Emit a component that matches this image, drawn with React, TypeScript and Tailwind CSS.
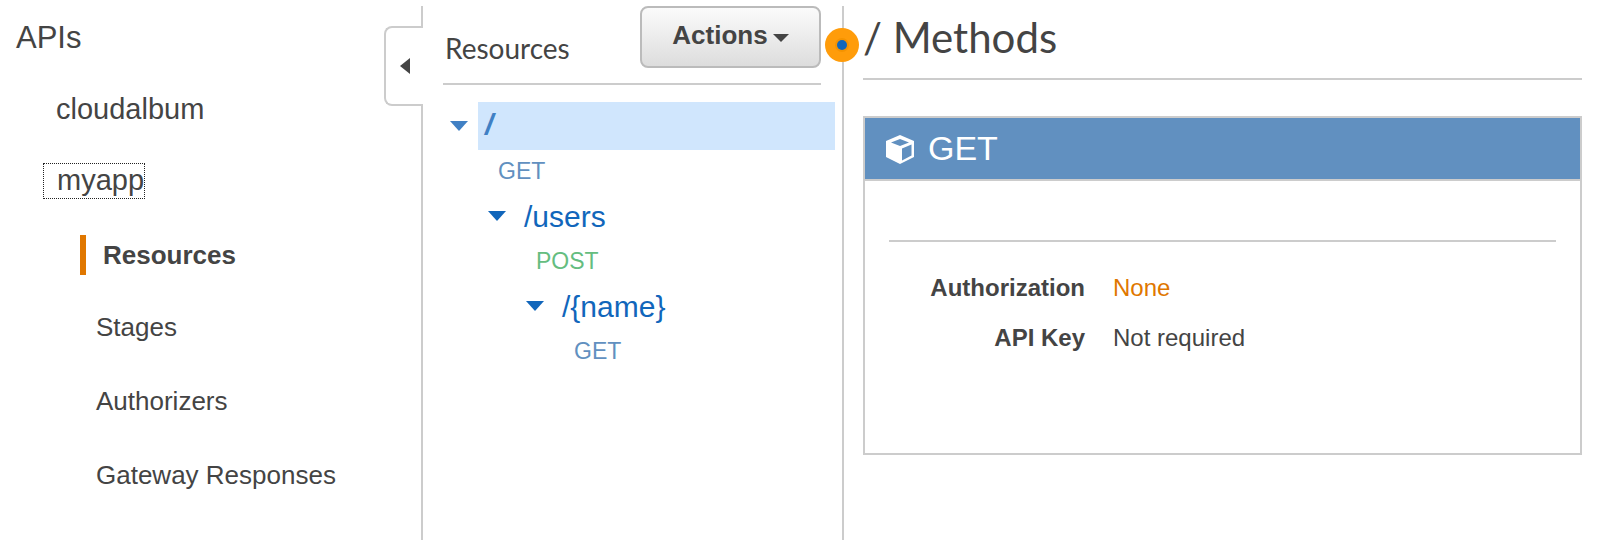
import React from "react";

const sans = "font-['Liberation_Sans',Arial,sans-serif]";
const lato = "font-['Lato',sans-serif]";

const Caret = ({ light }: { light?: boolean }) => (
  <svg width="18" height="10" viewBox="0 0 18 10" className="shrink-0">
    <path d="M0 0H18L9 10Z" fill={light ? "#4080c4" : "#1166bb"} />
  </svg>
);

const CubeIcon = () => (
  <svg width="32" height="32" viewBox="0 0 32 32" className="shrink-0">
    <path d="M16 2 L30 8 V24 L16 31 L2 24 V8 Z" fill="#fff" />
    <path d="M16 6 L25 9.5 L16 13 L7 9.5 Z" fill="#6190c0" />
    <path d="M18 15.5 L27.5 11.5 V22.5 L18 27.5 Z" fill="#6190c0" />
  </svg>
);

const App: React.FC = () => {
  return (
    <div className={`relative flex h-[540px] w-[1598px] overflow-hidden bg-white text-[#444] ${sans}`}>
      {/* left nav */}
      <div className="relative mt-[6px] w-[423px] shrink-0 border-r-2 border-[#ccc]">
        <div className="pl-4 pt-[12px] text-[31px] leading-[40px]">APIs</div>
        <ul className="text-[27px] leading-[36px]">
          <li className="mt-[33px] pl-[56px] text-[29px]">cloudalbum</li>
          <li className="mt-[36px] pl-[43px]">
            <span className="block h-[36px] w-[102px] border border-dotted border-[#222] pl-[13px] text-[29px] leading-[32px]">myapp</span>
          </li>
        </ul>
        <div className="mt-[36px] ml-[80px] border-l-[6px] border-[#e07700] pl-[17px] text-[26px] font-bold leading-[40px]">Resources</div>
        <ul className="mt-[34px] flex flex-col gap-[38px] pl-[96px] text-[26px] leading-[36px]">
          <li>Stages</li>
          <li>Authorizers</li>
          <li>Gateway Responses</li>
        </ul>
        {/* collapse tab */}
        <div className="absolute left-[384px] top-[20px] flex h-[80px] w-[39px] items-center rounded-l-lg border-2 border-r-0 border-[#ccc] bg-white pl-[14px]">
          <svg width="10" height="16" viewBox="0 0 10 16">
            <path d="M10 0V16L0 8Z" fill="#444" />
          </svg>
        </div>
      </div>

      {/* resources tree */}
      <div className="mt-[6px] w-[421px] shrink-0 border-r-2 border-[#ccc] pl-5 pr-[21px]">
        <div className="flex h-[79px] items-start justify-between border-b-2 border-[#ccc]">
          <div className={`${lato} pl-[2px] pt-[24px] text-[28px] leading-[36px]`}>Resources</div>
          <button className="flex h-[62px] w-[181px] items-center justify-center rounded-lg border-2 border-[#bbb] bg-gradient-to-b from-[#fbfbfb] to-[#ddd] pb-[3px] text-[26px] font-bold">
            Actions
            <svg width="16" height="8" viewBox="0 0 16 8" className="ml-[5px] mt-[4px]">
              <path d="M0 0H16L8 8Z" fill="#444" />
            </svg>
          </button>
        </div>
        <div className="mt-[17px]">
          <div className="flex items-center">
            <div className="flex w-[35px] justify-center pr-1"><Caret light /></div>
            <div className="mr-[-14px] h-[48px] flex-1 bg-[#d0e6fd] pl-[7px] text-[30px] font-bold italic leading-[46px] text-[#4080c4]">/</div>
          </div>
          <div className="h-[42px] pl-[55px] text-[23px] leading-[42px] text-[#6190c0]">GET</div>
          <div className="flex h-[48px] items-center pl-[45px] text-[30px] text-[#1166bb]">
            <Caret />
            <span className="ml-[18px]">/users</span>
          </div>
          <div className="h-[42px] pl-[93px] text-[23px] leading-[42px] text-[#65bd80]">POST</div>
          <div className="flex h-[48px] items-center pl-[83px] text-[30px] text-[#1166bb]">
            <Caret />
            <span className="ml-[18px]">/{"{name}"}</span>
          </div>
          <div className="h-[42px] pl-[131px] text-[23px] leading-[42px] text-[#6190c0]">GET</div>
        </div>
      </div>

      {/* methods */}
      <div className="min-w-0 flex-1 pl-[19px] pr-[16px]">
        <div className={`${lato} h-[80px] border-b-2 border-[#ccc] text-[42px] leading-[74px]`}>/ Methods</div>
        <div className="mt-[36px] h-[339px] border-2 border-[#ccc]">
          <div className="flex h-[63px] items-center gap-[12px] border-b-2 border-[#ccc] bg-[#6190c0] pl-[19px] text-[34px] text-white">
            <CubeIcon />
            GET
          </div>
          <div className="mx-[24px] mt-[59px] border-t-2 border-[#ccc] pt-[21px] text-[24px] leading-[50px]">
            <div className="flex">
              <div className="w-[196px] text-right font-bold">Authorization</div>
              <div className="ml-[28px] text-[#e07700]">None</div>
            </div>
            <div className="flex">
              <div className="w-[196px] text-right font-bold">API Key</div>
              <div className="ml-[28px]">Not required</div>
            </div>
          </div>
        </div>
      </div>

      {/* orange marker */}
      <div className="absolute left-[825px] top-[28px] flex h-[34px] w-[34px] items-center justify-center rounded-full bg-[#ff9c0a]">
        <div className="h-[10px] w-[10px] rounded-full bg-[#1166bb] ring-2 ring-[#f59300]" />
      </div>
    </div>
  );
};

export default App;
